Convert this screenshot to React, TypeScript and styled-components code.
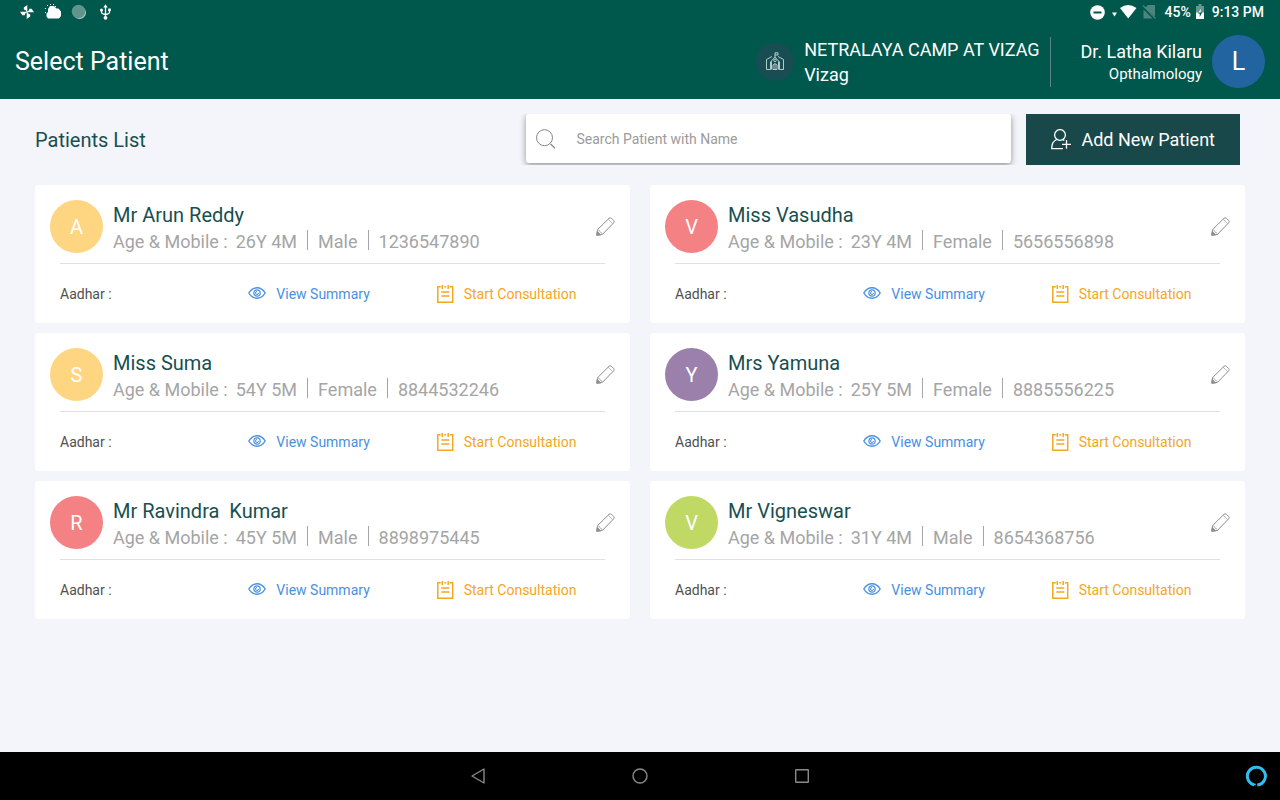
import React from "react";
import styled, { createGlobalStyle } from "styled-components";

const GlobalStyle = createGlobalStyle`
  * { box-sizing: border-box; }
  body { margin: 0; font-family: Roboto, "Liberation Sans", sans-serif; background: #f4f5fa; }
  button, input { font-family: inherit; }
  h1, h2, h3, p, ul { margin: 0; padding: 0; font-weight: 400; }
  svg { display: block; flex: none; }
`;

const Screen = styled.div`
  display: flex;
  flex-direction: column;
  min-height: 100vh;
`;

const StatusBar = styled.div`
  display: flex;
  align-items: center;
  justify-content: space-between;
  height: 24px;
  padding: 0 16px 0 19px;
  background: #00574b;
  color: #fff;
  font-size: 14px;
  font-weight: 500;
  line-height: 16px;
`;

const StatusGroup = styled.div<{ $gap: number }>`
  display: flex;
  align-items: center;
  gap: ${(p) => p.$gap}px;
`;

const AppBar = styled.header`
  display: flex;
  align-items: center;
  height: 75px;
  padding: 0 15px;
  background: #00574b;
  color: #fff;
`;

const ScreenTitle = styled.h1`
  flex: 1;
  font-size: 25px;
  line-height: 30px;
`;

const CampBadge = styled.span`
  display: flex;
  align-items: center;
  justify-content: center;
  width: 38px;
  height: 38px;
  margin-right: 10px;
  border-radius: 50%;
  background: #184e53;
`;

const CampText = styled.div`
  padding-right: 10px;
  font-size: 18px;
  line-height: 25px;
`;

const DoctorBlock = styled.div`
  display: flex;
  align-items: center;
  gap: 10px;
  height: 50px;
  padding-left: 30px;
  border-left: 1px solid #5d8583;
`;

const DoctorText = styled.div`
  text-align: right;
`;

const DoctorName = styled.p`
  font-size: 18px;
  line-height: 24px;
`;

const DoctorField = styled.p`
  font-size: 15px;
  line-height: 20px;
`;

const Avatar = styled.span<{ $color: string; $size: number }>`
  display: flex;
  flex: none;
  align-items: center;
  justify-content: center;
  width: 53px;
  height: 53px;
  border-radius: 50%;
  background: ${(p) => p.$color};
  color: #fff;
  font-size: ${(p) => p.$size}px;
`;

const Content = styled.main`
  flex: 1;
  padding: 15px 35px;
`;

const Toolbar = styled.div`
  display: flex;
  align-items: center;
  height: 51px;
  margin-bottom: 20px;
  padding-right: 5px;
`;

const ListTitle = styled.h2`
  flex: 1;
  color: #184f50;
  font-size: 20px;
  line-height: 24px;
`;

const SearchArea = styled.div`
  flex: 0 1 515px;
  height: 51px;
  padding: 0 15px 2px;
  overflow: hidden;
`;

const SearchBox = styled.label`
  display: flex;
  align-items: center;
  gap: 20px;
  height: 49px;
  padding: 0 10px;
  border-radius: 3px;
  background: #fff;
  box-shadow: 0 2px 6px rgba(0, 0, 0, 0.42);
`;

const SearchInput = styled.input`
  flex: 1;
  min-width: 0;
  padding: 0;
  border: 0;
  outline: 0;
  background: transparent;
  color: #444;
  font-size: 14px;
  line-height: 20px;
  &::placeholder { color: #9b9b9b; opacity: 1; }
`;

const AddButton = styled.button`
  display: flex;
  align-items: center;
  gap: 10px;
  height: 51px;
  padding: 1px 25px 0;
  border: 0;
  background: #184849;
  color: #fff;
  font-size: 18px;
  line-height: 24px;
  white-space: nowrap;
`;

const CardGrid = styled.ul`
  display: grid;
  grid-template-columns: 1fr 1fr;
  gap: 10px 20px;
  list-style: none;
`;

const Card = styled.li`
  height: 138px;
  padding: 15px 0 0;
  border-radius: 3px;
  background: #fff;
`;

const CardTop = styled.div`
  display: flex;
  align-items: center;
  gap: 10px;
  height: 53px;
  padding: 0 15px;
`;

const PatientInfo = styled.div`
  flex: 1;
`;

const PatientName = styled.h3`
  color: #184f50;
  font-size: 20px;
  line-height: 30px;
  white-space: pre;
`;

const PatientMeta = styled.div`
  display: flex;
  align-items: center;
  color: #a5a5a5;
  font-size: 18px;
  line-height: 24px;
`;

const MetaLabel = styled.span`
  margin-right: -2px;
`;

const MetaItem = styled.span`
  padding: 0 10px;
`;

const MetaRule = styled.span`
  width: 1px;
  height: 20px;
  margin-bottom: 4px;
  background: #a5a5a5;
`;

const IconButton = styled.button`
  padding: 0;
  border: 0;
  background: transparent;
  color: #8d8d8d;
`;

const CardFooter = styled.div`
  display: grid;
  grid-template-columns: repeat(3, 1fr);
  align-items: center;
  height: 60px;
  padding: 0 5px 0 25px;
`;

const CardRule = styled.hr`
  height: 1px;
  margin: 10px 25px 0;
  border: 0;
  background: #dfdfdf;
`;

const Aadhar = styled.span`
  color: #505050;
  font-size: 14px;
  line-height: 20px;
`;

const Action = styled.button<{ $color: string }>`
  display: flex;
  align-items: center;
  gap: 10px;
  padding: 0;
  border: 0;
  background: transparent;
  color: ${(p) => p.$color};
  font-size: 14px;
  line-height: 20px;
`;

const SystemNav = styled.nav`
  display: grid;
  grid-template-columns: 1fr auto 1fr;
  height: 48px;
  background: #000;
`;

const NavKeys = styled.div`
  display: flex;
  grid-column: 2;
  gap: 114px;
`;

const NavKey = styled.button<{ $end?: boolean }>`
  display: flex;
  align-items: center;
  justify-content: center;
  justify-self: ${(p) => (p.$end ? "end" : "auto")};
  width: 48px;
  height: 48px;
  padding: 0;
  border: 0;
  background: transparent;
`;

const PinwheelIcon = () => (
  <svg width="16" height="16" viewBox="0 0 16 16" fill="#fff">
    {[0, 90, 180, 270].map((turn) => (
      <path key={turn} d="M8.300 8V1L4.800 3.400V5.600Q7.300 6 7.600 8Z" transform={`rotate(${turn} 8 8)`} />
    ))}
  </svg>
);

const WeatherIcon = () => (
  <svg width="16" height="16" viewBox="0 0 16 16" fill="#fff">
    <path d="M3 14.500L1.500 12.500V9.500L3 8V5L5 2H9L11.500 4.500H13.500L16 7.500V12L14 14.500Z" />
    <path d="M2 1h1v1H2zM5 0h1v1H5zM8 0h1v1H8zM0 4h1v1H0zM0 8h1v1H0zM10 2h1v1h-1z" />
  </svg>
);

const MoonIcon = () => (
  <svg width="16" height="16" viewBox="0 0 16 16">
    <circle cx="8.500" cy="8.500" r="6.500" fill="#bdd2cd" />
    <circle cx="7.500" cy="7.500" r="6.800" fill="#5f958c" />
  </svg>
);

const UsbIcon = () => (
  <svg width="16" height="16" viewBox="0 0 16 16" fill="none" stroke="#fff" strokeWidth="1.300">
    <path d="M8.500 2.500V13M4.500 6.500V8Q4.500 10 8.500 10.500M12.500 6V8Q12.500 10 8.500 10.500" />
    <path d="M8.500 .2L10.700 3.500H6.300Z" fill="#fff" stroke="none" />
    <circle cx="8.500" cy="13.800" r="1.900" fill="#fff" stroke="none" />
    <circle cx="4.500" cy="6" r="1.500" fill="#fff" stroke="none" />
    <path d="M11.200 4.500h2.600v2.600h-2.600z" fill="#fff" stroke="none" />
  </svg>
);

const SignalIcons = () => (
  <svg width="67" height="16" viewBox="0 0 67 16">
    <circle cx="7.500" cy="8.500" r="7.300" fill="#fff" />
    <path d="M3.500 7.500h8v2h-8z" fill="#00574b" />
    <path d="M22 8.500h5L24.500 12.500Z" fill="#fff" />
    <path d="M30 4Q38 -2 46.500 4L38.200 14.500Z" fill="#fff" />
    <path d="M55 4L58 1H65V12.500ZM53.500 5.500L62.500 14.500H53.500Z" fill="#4b867e" />
    <path d="M53 1.500L65.500 14.500" stroke="#4b867e" strokeWidth="1.200" />
  </svg>
);

const BatteryIcon = () => (
  <svg width="8" height="16" viewBox="0 0 8 16">
    <path d="M2.500 0h3v2H8V9H0V2h2.500z" fill="#659790" />
    <path d="M0 8.500h8V15H0z" fill="#fff" />
    <path d="M4.800 4.500L2 9.500H3.700V13L6.300 8.300H4.800Z" fill="#00574b" />
    <path d="M4.800 4.500L2.500 8.500H4.800Z" fill="#fff" />
  </svg>
);

const CampIcon = () => (
  <svg width="18" height="19" viewBox="0 0 18 19" fill="none" stroke="#dce7e7" strokeWidth="0.800">
    <path d="M.5 17.500V7.500L6 4.500M17.500 17.500V7.500L12 4.500M.5 17.500H4.500V10M17.500 17.500H13.500V10" />
    <path d="M9 5V.8H12V3H9M4.500 10L9 5L13.500 10M5.500 17.500V9.500M12.500 17.500V9.500M7 17.500V13Q9 10 11 13V17.500M9 12V17.500M7 17.500H11" />
    <circle cx="9" cy="8.300" r="1.300" />
  </svg>
);

const SearchIcon = () => (
  <svg width="20" height="20" viewBox="0 0 20 20" fill="none" stroke="#858585" strokeWidth="1">
    <circle cx="8.500" cy="8.700" r="8" />
    <path d="M14.500 15L19 19.200" strokeWidth="1.200" />
  </svg>
);

const AddUserIcon = () => (
  <svg width="20" height="22" viewBox="0 0 20 22" fill="none" stroke="#fff" strokeWidth="1.300">
    <circle cx="9" cy="6" r="5.400" />
    <path d="M5.700 10.500Q.7 12.500.7 19.600H12M12 10.600L13.300 11.500M15.500 11V19.800M11 15.400H20" />
  </svg>
);

const EditIcon = () => (
  <svg width="19" height="19" viewBox="0 0 19 19" fill="none" stroke="currentColor" strokeWidth="1" strokeLinejoin="round">
    <path d="M.8 18.200L1.500 12.700L13 1.300Q14.200.2 15.500 1.300L17.700 3.500Q18.700 4.700 17.700 5.800L6.300 17.500Z" />
    <path d="M1.500 12.700L3.500 13.500L4 15.200L5.700 15.800L6.300 17.500M12.200 2.200L16.700 6.600" strokeWidth="0.600" />
    <path d="M.8 18.200L1.200 14.500L4.500 17.800Z" fill="currentColor" />
  </svg>
);

const EyeIcon = () => (
  <svg width="18" height="14" viewBox="0 0 18 14" fill="none" stroke="currentColor">
    <path d="M.8 6Q4 .8 9 .8T17.200 6Q14 11.200 9 11.200T.8 6Z" strokeWidth="1.400" />
    <circle cx="9" cy="6" r="3.200" strokeWidth="1.200" />
    <path d="M9 4.500A1.500 1.500 0 1 0 10.500 6" />
  </svg>
);

const NotesIcon = () => (
  <svg width="17" height="20" viewBox="0 0 17 20" fill="none" stroke="currentColor" strokeWidth="1.500">
    <path d="M3.700 2.700H.8V18.200H15.700V2.700H12.800M7.300 2.700H9.200" />
    <path d="M5.300 1V5M11.200 1V5" />
    <path d="M4.300 8H12.300M4.300 12H12.300" />
  </svg>
);

const patients = [
  { name: "Mr Arun Reddy", age: "26Y 4M", sex: "Male", mobile: "1236547890", color: "#fed580", initial: "A" },
  { name: "Miss Vasudha", age: "23Y 4M", sex: "Female", mobile: "5656556898", color: "#f48183", initial: "V" },
  { name: "Miss Suma", age: "54Y 5M", sex: "Female", mobile: "8844532246", color: "#fed580", initial: "S" },
  { name: "Mrs Yamuna", age: "25Y 5M", sex: "Female", mobile: "8885556225", color: "#9a80ab", initial: "Y" },
  { name: "Mr Ravindra  Kumar", age: "45Y 5M", sex: "Male", mobile: "8898975445", color: "#f48183", initial: "R" },
  { name: "Mr Vigneswar", age: "31Y 4M", sex: "Male", mobile: "8654368756", color: "#c0d965", initial: "V" },
];

type Patient = (typeof patients)[number];

const PatientCard = ({ patient }: { patient: Patient }) => (
  <Card>
    <CardTop>
      <Avatar $color={patient.color} $size={20}>{patient.initial}</Avatar>
      <PatientInfo>
        <PatientName>{patient.name}</PatientName>
        <PatientMeta>
          <MetaLabel>Age &amp; Mobile :</MetaLabel>
          <MetaItem>{patient.age}</MetaItem>
          <MetaRule />
          <MetaItem>{patient.sex}</MetaItem>
          <MetaRule />
          <MetaItem>{patient.mobile}</MetaItem>
        </PatientMeta>
      </PatientInfo>
      <IconButton aria-label="Edit patient"><EditIcon /></IconButton>
    </CardTop>
    <CardRule />
    <CardFooter>
      <Aadhar>Aadhar :</Aadhar>
      <Action $color="#4990e2"><EyeIcon />View Summary</Action>
      <Action $color="#f5a623"><NotesIcon />Start Consultation</Action>
    </CardFooter>
  </Card>
);

export default function App() {
  return (
    <Screen>
      <GlobalStyle />
      <StatusBar>
        <StatusGroup $gap={10}>
          <PinwheelIcon />
          <WeatherIcon />
          <MoonIcon />
          <UsbIcon />
        </StatusGroup>
        <StatusGroup $gap={8}>
          <SignalIcons />
          <StatusGroup $gap={5}>
            <span>45%</span>
            <BatteryIcon />
          </StatusGroup>
          <span>9:13 PM</span>
        </StatusGroup>
      </StatusBar>
      <AppBar>
        <ScreenTitle>Select Patient</ScreenTitle>
        <CampBadge><CampIcon /></CampBadge>
        <CampText>
          <p>NETRALAYA CAMP AT VIZAG</p>
          <p>Vizag</p>
        </CampText>
        <DoctorBlock>
          <DoctorText>
            <DoctorName>Dr. Latha Kilaru</DoctorName>
            <DoctorField>Opthalmology</DoctorField>
          </DoctorText>
          <Avatar $color="#2264a0" $size={25}>L</Avatar>
        </DoctorBlock>
      </AppBar>
      <Content>
        <Toolbar>
          <ListTitle>Patients List</ListTitle>
          <SearchArea>
            <SearchBox>
              <SearchIcon />
              <SearchInput type="text" aria-label="Search patient" placeholder="Search Patient with Name" />
            </SearchBox>
          </SearchArea>
          <AddButton><AddUserIcon />Add New Patient</AddButton>
        </Toolbar>
        <CardGrid>
          {patients.map((p) => <PatientCard key={p.mobile} patient={p} />)}
        </CardGrid>
      </Content>
      <SystemNav>
        <NavKeys>
          <NavKey aria-label="Back">
            <svg width="16" height="16" viewBox="0 0 16 16" fill="none" stroke="#8a8a8a" strokeWidth="1.400" strokeLinejoin="round"><path d="M14 1V15L2 8Z" /></svg>
          </NavKey>
          <NavKey aria-label="Home">
            <svg width="16" height="16" viewBox="0 0 16 16" fill="none" stroke="#8a8a8a" strokeWidth="1.400"><circle cx="8" cy="8" r="7" /></svg>
          </NavKey>
          <NavKey aria-label="Recent apps">
            <svg width="16" height="16" viewBox="0 0 16 16" fill="none" stroke="#8a8a8a" strokeWidth="1.400"><rect x="1.700" y="1.700" width="12.600" height="12.600" rx="0.500" /></svg>
          </NavKey>
        </NavKeys>
        <NavKey $end aria-label="Voice assistant">
          <svg width="22" height="22" viewBox="0 0 22 22" fill="none" stroke="#31bdf0" strokeWidth="3"><path d="M9.300 20.200V19.900A9 9 0 1 1 12.300 20.100" /></svg>
        </NavKey>
      </SystemNav>
    </Screen>
  );
}
